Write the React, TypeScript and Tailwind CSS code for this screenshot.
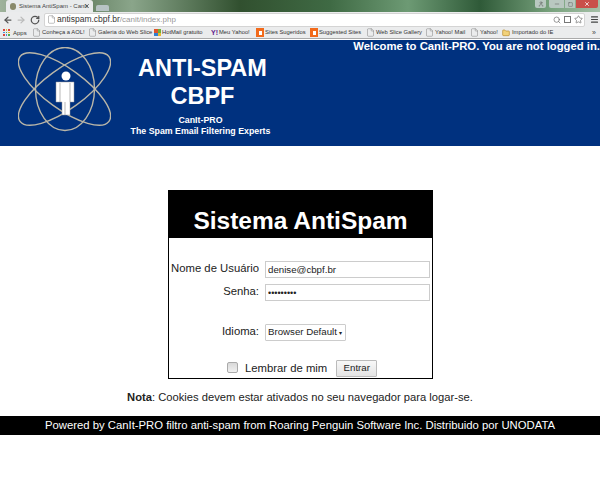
import React from 'react';
import { ArrowLeft, ArrowRight, RotateCw, Search, Star, Menu, File, Folder, X, Minus, Square, User } from 'lucide-react';

const bookmarks = [
  { label: 'Conheça a AOL!', width: 'w-[56px]' },
  { label: 'Galeria do Web Slice', width: 'w-[66px]' },
  { label: 'HotMail gratuito', width: 'w-[57px]', icon: 'ms' },
  { label: 'Meu Yahoo!', width: 'w-[45px]', icon: 'y' },
  { label: 'Sites Sugeridos', width: 'w-[54px]', icon: 'o' },
  { label: 'Suggested Sites', width: 'w-[56px]', icon: 'o' },
  { label: 'Web Slice Gallery', width: 'w-[59px]' },
  { label: 'Yahoo! Mail', width: 'w-[45px]' },
  { label: 'Yahoo!', width: 'w-[32px]' },
];

function BookmarkIcon({ icon }: { icon?: string }) {
  if (icon === 'ms') {
    return (
      <span className="grid grid-cols-2 w-[7px] h-[7px] shrink-0">
        <span className="bg-[#e0552b]" />
        <span className="bg-[#6fae3a]" />
        <span className="bg-[#2f7fd0]" />
        <span className="bg-[#e8b92e]" />
      </span>
    );
  }
  if (icon === 'y') {
    return <span className="text-[7px] leading-none font-bold text-[#5f1a8c] shrink-0">Y!</span>;
  }
  if (icon === 'o') {
    return <span className="w-[8px] h-[9px] bg-[#f26a1b] shrink-0 flex items-center justify-center"><span className="w-[3px] h-[4px] bg-white" /></span>;
  }
  return <File size={9} strokeWidth={1.2} className="text-[#777] shrink-0" />;
}

function Atom() {
  return (
    <svg width="93" height="85" viewBox="0 0 93 85" className="shrink-0 mt-[7px]">
      <g fill="none" stroke="#b9b6a8" strokeWidth="1.4">
        <ellipse cx="46.5" cy="42" rx="55" ry="20" transform="rotate(36 46.5 42)" />
        <ellipse cx="46.5" cy="42" rx="55" ry="20" transform="rotate(-36 46.5 42)" />
        <ellipse cx="47" cy="42" rx="29.5" ry="41.5" />
      </g>
      <circle cx="48" cy="29" r="4.5" fill="#fff" />
      <path d="M38 35h18v20h-2.5v0h-1.500v13h-8v-13h-1.500v0h-4.500z" fill="#fff" stroke="#999" strokeWidth="0.5" />
      <path d="M47 55v13M42 36v19M52 36v19" stroke="#888" strokeWidth="0.6" />
    </svg>
  );
}

export default function App() {
  return (
    <div className="w-[600px] h-[480px] overflow-hidden bg-white font-['Liberation_Sans',Arial,sans-serif]">
      {/* browser chrome */}
      <div className="h-[12px] flex items-end bg-[linear-gradient(90deg,#9fb39c_0%,#5f7a5c_12%,#8aa58a_22%,#31502f_40%,#3f6a44_55%,#6d9a74_68%,#2f5a38_80%,#79a37e_92%,#a6c0a8_100%)] relative">
        <div className="ml-[6px] w-[87px] h-[12px] bg-[#e9ebec] rounded-t-[3px] flex items-center pl-[4px] gap-[3px]">
          <span className="w-[6px] h-[7px] rounded-full bg-[#8a8a6a] shrink-0" />
          <span className="text-[6px] leading-none text-[#444] whitespace-nowrap w-[62px]">Sistema AntiSpam - CanIt</span>
          <X size={6} strokeWidth={3} className="text-[#444] shrink-0" />
        </div>
        <div className="ml-[3px] w-[13px] h-[6px] mb-[1px] bg-[#b7c3c4] rounded-t-[2px]" />
        <div className="absolute right-[2px] top-0 flex gap-[1px]">
          <div className="w-[11px] h-[8px] bg-[#b9c8c0] rounded-b-[2px] flex items-center justify-center mr-[2px]"><User size={6} className="text-[#555]" /></div>
          <div className="w-[15px] h-[8px] bg-[#b9c8c0] rounded-bl-[2px] flex items-center justify-center"><Minus size={6} className="text-[#555]" /></div>
          <div className="w-[10px] h-[8px] bg-[#b9c8c0] flex items-center justify-center"><Square size={5} className="text-[#555]" /></div>
          <div className="w-[22px] h-[8px] bg-[#c9504a] rounded-br-[2px] flex items-center justify-center"><X size={6} strokeWidth={3} className="text-white" /></div>
        </div>
      </div>
      <div className="h-[15px] bg-[#ebeced] flex items-center pl-[3px] pr-[1px] gap-[3px]">
        <ArrowLeft size={10} strokeWidth={3} className="text-[#555]" />
        <ArrowRight size={10} strokeWidth={3} className="text-[#bbb]" />
        <RotateCw size={10} strokeWidth={3} className="text-[#555] ml-[1px]" />
        <div className="ml-[1px] flex-1 h-[14px] bg-white border border-[#d4d4d4] rounded-[2px] flex items-center pl-[2px] pr-[1px]">
          <File size={9} strokeWidth={1.2} className="text-[#777]" />
          <span className="ml-[1px] text-[8.5px] leading-none text-[#333]">antispam.cbpf.br</span>
          <span className="text-[8px] leading-none text-[#999]">/canit/index.php</span>
          <Search size={8} className="ml-auto text-[#666]" />
          <span className="ml-[3px] w-[7px] h-[7px] border border-[#777]" />
          <Star size={9} className="ml-[3px] text-[#777]" />
        </div>
        <Menu size={9} strokeWidth={3} className="text-[#444] ml-[2px]" />
      </div>
      <div className="h-[12px] bg-[#ebeced] border-b border-[#aaa] flex items-center pl-[3px]">
        <div className="flex items-center gap-[3px] w-[29px]">
          <span className="grid grid-cols-3 gap-[1px] w-[7px] h-[7px]">
            <span className="bg-[#d9453d]" /><span className="bg-[#e8b92e]" /><span className="bg-[#d9453d]" />
            <span className="bg-[#4a90d9]" /><span className="bg-[#4caf50]" /><span className="bg-[#e8b92e]" />
            <span className="bg-[#d9453d]" /><span className="bg-[#4a90d9]" /><span className="bg-[#4caf50]" />
          </span>
          <span className="text-[6px] leading-none text-[#333]">Apps</span>
        </div>
        {bookmarks.map((b) => (
          <div key={b.label} className={`flex items-center gap-[1px] ${b.width}`}>
            <BookmarkIcon icon={b.icon} />
            <span className="text-[5.8px] leading-none text-[#333] whitespace-nowrap">{b.label}</span>
          </div>
        ))}
        <div className="flex items-center gap-[2px]">
          <Folder size={8} className="text-[#b98a2a] fill-[#f2d27a] shrink-0" />
          <span className="text-[5.8px] leading-none text-[#333] whitespace-nowrap">Importado do IE</span>
        </div>
        <span className="ml-auto mr-[4px] text-[7px] leading-none text-[#444]">»</span>
      </div>

      {/* header */}
      <div className="relative mt-[1px] h-[106px] bg-[#00317f] flex items-start pl-[18px]">
        <Atom />
        <div className="ml-[20px] mt-[14px] w-[143px] flex flex-col items-center text-white font-bold">
          <div className="text-[23.5px] leading-[28px]">ANTI-SPAM</div>
          <div className="text-[23.5px] leading-[28px]">CBPF</div>
          <div className="text-[8.8px] leading-[11px] mt-[5px] mr-[4px]">CanIt-PRO</div>
          <div className="text-[8.8px] leading-[11px] mr-[4px] whitespace-nowrap">The Spam Email Filtering Experts</div>
        </div>
        <div className="absolute right-0 top-[-1px] text-[11.3px] leading-[15px] font-bold text-white whitespace-nowrap">
          Welcome to CanIt-PRO. You are not logged in.
        </div>
      </div>

      {/* login */}
      <div className="mt-[44px] w-[265px] h-[189px] border border-black ml-[168px]">
        <div className="h-[47px] bg-black text-white text-[24.5px] leading-[47px] pt-[6px] font-bold text-center">Sistema AntiSpam</div>
        <div className="pt-[23px] pl-[2px] text-[11.3px] text-[#222]">
          <div className="flex items-center gap-[6px] h-[17px]">
            <div className="w-[88px] text-right whitespace-nowrap mb-[2px]">Nome de Usuário</div>
            <input readOnly value="denise@cbpf.br" className="w-[165px] h-[17px] border border-[#ccc] px-[2px] text-[9.7px] text-[#222] outline-none" />
          </div>
          <div className="flex items-center gap-[6px] h-[17px] mt-[6px]">
            <div className="w-[88px] text-right mb-[2px]">Senha:</div>
            <input readOnly type="password" value="123456789" className="w-[165px] h-[17px] border border-[#ccc] px-[2px] text-[9px] text-[#222] outline-none" />
          </div>
          <div className="flex items-center gap-[6px] h-[17px] mt-[23px]">
            <div className="w-[88px] text-right mb-[3px]">Idioma:</div>
            <div className="w-[81px] h-[17px] border border-[#ccc] rounded-[1px] flex items-center pl-[2px] text-[9.7px] text-[#222] whitespace-nowrap">
              Browser Default
              <span className="ml-auto mr-[3px] text-[6px] leading-none">▾</span>
            </div>
          </div>
          <div className="flex items-center h-[19px] mt-[18px] pl-[56px]">
            <span className="w-[11px] h-[11px] mb-[3px] border border-[#aaa] rounded-[2px] bg-[linear-gradient(#d9d9d9,#f0f0f0)]" />
            <span className="ml-[7px] text-[11.3px]">Lembrar de mim</span>
            <button className="ml-[9px] w-[41px] h-[17px] border border-[#bbb] rounded-[1px] bg-[linear-gradient(#f8f8f8,#e4e4e4)] text-[9.7px] text-[#222]">Entrar</button>
          </div>
        </div>
      </div>

      <div className="mt-[10px] text-center text-[11.2px] leading-[16px] text-[#222]">
        <b>Nota</b>: Cookies devem estar ativados no seu navegador para logar-se.
      </div>
      <div className="mt-[11px] h-[19px] bg-black text-white text-[11.3px] leading-[19px] text-center">
        Powered by CanIt-PRO filtro anti-spam from Roaring Penguin Software Inc. Distribuido por UNODATA
      </div>
    </div>
  );
}
